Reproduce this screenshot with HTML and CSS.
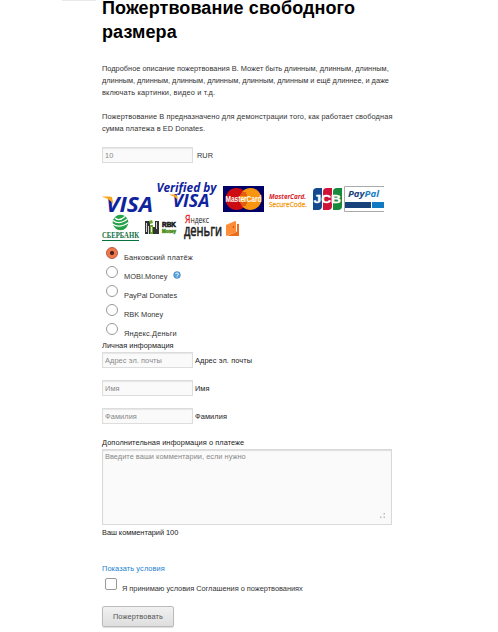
FILE: index.html
```
<!DOCTYPE html>
<html lang="ru">
<head>
<meta charset="utf-8">
<title>Пожертвование свободного размера</title>
<link rel="stylesheet" href="styles.css">
</head>
<body>
<div class="tab-edge"></div>
<main class="page">
  <h1 class="title">Пожертвование свободного<br>размера</h1>
  <p class="text"><span class="snug">Подробное описание пожертвования B. Может быть длинным, длинным, длинным,</span><br><span class="tight">длинным, длинным, длинным, длинным, длинным, длинным и ещё длиннее, и даже</span><br><span class="wider">включать картинки, видео и т.д.</span></p>
  <p class="text"><span class="wide">Пожертвование B предназначено для демонстрации того, как работает свободная</span><br>сумма платежа в ED Donates.</p>
  <div class="amount"><input class="field" type="text" placeholder="10"><span>RUR</span></div>

  <div class="logos">
    <svg width="51" height="33" viewBox="0 0 51 33">
      <text class="visa" x="4" y="32" font-size="21.500" textLength="47" lengthAdjust="spacingAndGlyphs">VISA</text>
      <path fill="#f9a51a" d="M.500 16.500H8q2 0 2.300 2l1 6Q8 18.500.500 17z"/>
    </svg>
    <svg class="verified" width="65" height="33" viewBox="0 0 65 33">
      <text class="visa" x="3.500" y="11.500" font-size="12" textLength="60" lengthAdjust="spacingAndGlyphs">Verified by</text>
      <text class="visa" x="19.500" y="26.500" font-size="17" textLength="37" lengthAdjust="spacingAndGlyphs">VISA</text>
      <path fill="#f9a51a" d="M16.500 14.500H22q1.500 0 2 1.500l.8 4.500Q22.500 16 16.500 15z"/>
    </svg>
    <svg class="mastercard" width="41" height="26" viewBox="0 0 41 26">
      <path fill="#000066" d="M0 0h41v26H0z"/>
      <circle cx="13.500" cy="13" r="11" fill="#cc0b12"/><circle cx="27.500" cy="13" r="11" fill="#f79410"/>
      <path stroke="#cc0b12" stroke-width=".8" d="M18 7h5M17 9h7M17 17h7M18 19h5"/>
      <text x="2.500" y="16" font-size="8.500" fill="#fff" font-weight="bold" textLength="36" lengthAdjust="spacingAndGlyphs">MasterCard</text>
    </svg>
    <svg class="secure" width="39" height="20" viewBox="0 0 39 20">
      <text class="open" x="0" y="7" font-size="7" fill="#d81e2a" font-weight="bold" font-style="italic" textLength="37" lengthAdjust="spacingAndGlyphs">MasterCard.</text>
      <text class="open" x="0" y="14.500" font-size="7.500" fill="#f5a01b" stroke="#f5a01b" stroke-width=".3" textLength="38" lengthAdjust="spacingAndGlyphs">SecureCode.</text>
    </svg>
    <svg class="jcb" width="29" height="22" viewBox="0 0 29 22">
      <path fill="#14488f" d="M4 0h5v18q0 4-4 4H0V4q0-4 4-4z"/>
      <path fill="#cf1238" d="M14 0h5v18q0 4-4 4h-5V4q0-4 4-4z"/>
      <path fill="#188a3c" d="M24 0h5v18q0 4-4 4h-5V4q0-4 4-4z"/>
      <text x=".5" y="14.500" font-size="10" fill="#fff" stroke="#fff" stroke-width=".3" font-weight="bold" textLength="27.500" lengthAdjust="spacingAndGlyphs">JCB</text>
    </svg>
    <svg class="paypal" width="40" height="26" viewBox="0 0 40 26">
      <path fill="#fff" stroke="#aaa" d="M40 .5H.5v25H40"/>
      <text class="open" x="4" y="10.500" font-size="9.500" fill="#17427c" font-weight="bold" font-style="italic" textLength="31" lengthAdjust="spacingAndGlyphs">Pay<tspan fill="#1a80c4">Pal</tspan></text>
      <path fill="#17427c" d="M1 16h26v6H1z"/><path fill="#117ac2" d="M28 16h12v6H28z"/>
    </svg>
  </div>
  <div class="logos second">
    <svg width="38" height="29" viewBox="0 0 38 29">
      <circle cx="18.500" cy="9.500" r="7.800" fill="#26a148"/>
      <g fill="none" stroke="#fff" stroke-width="1.200"><path d="M13 5q4 4 10-1.500M11 7.500q6 5 14.500-1.500M10.500 11q7 5 16-1.500"/></g>
      <text class="serif" x="0" y="25" font-size="7.500" fill="#126d3e" font-weight="bold" textLength="37" lengthAdjust="spacingAndGlyphs">СБЕРБАНК</text>
      <path fill="#06733c" d="M0 27h37v1H0z"/>
    </svg>
    <svg class="rbk" width="32" height="15" viewBox="0 0 32 15">
      <path fill="#333" d="M0 1h5v13H0zM10 1h4v13h-4z"/><path fill="#6ba72e" d="M5 5h3v9H5z"/><path fill="#333" d="M8 7h2v7H8z"/>
      <path fill="#6ba72e" d="m4 1 3-1 1 3-3 1z"/>
      <path stroke="#fff" stroke-width=".8" d="M1.500 3v9M3.500 6v8M11.500 2v7M6.500 7v5"/>
      <text x="17" y="7" font-size="6.500" fill="#222" stroke="#222" stroke-width=".6" font-weight="bold" textLength="14" lengthAdjust="spacingAndGlyphs">RBK</text>
      <text x="17" y="12.500" font-size="4.500" fill="#4f9021" stroke="#4f9021" stroke-width=".5" font-weight="bold" textLength="14" lengthAdjust="spacingAndGlyphs">Money</text>
    </svg>
    <svg class="yandex" width="58" height="29" viewBox="0 0 58 29">
      <text class="open" x="1" y="9.500" font-size="8.500" fill="#222" textLength="24" lengthAdjust="spacingAndGlyphs"><tspan fill="#e32119" stroke="#e32119" stroke-width=".3" font-size="11">Я</tspan>ндекс</text>
      <text class="open" x="0" y="23" font-size="15.500" fill="#222" stroke="#222" stroke-width=".6" textLength="38" lengthAdjust="spacingAndGlyphs">деньги</text>
      <path fill="#ff8c37" d="m42 12 9-4q1 0 1 1v10l-10 4z"/><path fill="#ef6c19" d="M53 11h2v12H43l10-4.500z"/><circle cx="49.500" cy="14" r=".8" fill="#a84418"/>
    </svg>
  </div>

  <div class="methods">
    <label class="method"><i class="radio on"></i><span class="wider">Банковский платёж</span></label>
    <label class="method"><i class="radio"></i><span>MOBI.Money</span>
      <svg class="help" width="8" height="8" viewBox="0 0 8 8"><circle cx="4" cy="4" r="3.400" fill="#5ba3dc" stroke="#2f74b5" stroke-width=".5"/><path fill="none" stroke="#fff" stroke-width=".8" d="M2.500 3q0-1 1.500-1t1.500 1T4 4.700M4 5.500v1"/></svg></label>
    <label class="method"><i class="radio"></i><span class="snug">PayPal Donates</span></label>
    <label class="method"><i class="radio"></i><span class="tight">RBK Money</span></label>
    <label class="method"><i class="radio"></i><span class="wider">Яндекс.Деньги</span></label>
  </div>
  <div class="legend">Личная информация</div>
  <div class="row"><input class="field" type="text" placeholder="Адрес эл. почты"><span class="wide">Адрес эл. почты</span></div>
  <div class="row"><input class="field" type="text" placeholder="Имя"><span>Имя</span></div>
  <div class="row"><input class="field" type="text" placeholder="Фамилия"><span class="wide">Фамилия</span></div>
  <div class="legend extra">Дополнительная информация о платеже</div>
  <div class="comment">
    <span>Введите ваши комментарии, если нужно</span>
    <svg class="grip" width="6" height="6" viewBox="0 0 6 6"><path fill="#bbb" d="M3.500 0H5v1.500H3.500zM3.500 3.500H5V5H3.500zM0 3.500h1.500V5H0z"/></svg>
  </div>
  <div class="legend count">Ваш комментарий 100</div>
  <a class="terms">Показать условия</a>
  <label class="accept"><i class="box"></i><span>Я принимаю условия Соглашения о пожертвованиях</span></label>
  <button class="submit">Пожертвовать</button>
</main>
</body>
</html>
```
FILE: styles.css
```
* { box-sizing: border-box; }
html { overflow: hidden; }
body {
  margin: 0;
  height: 632px;
  overflow: hidden;
  background: #fff;
  color: #333;
  font: 7.4px/12px "Liberation Sans", Arial, sans-serif;
  letter-spacing: .03px;
  white-space: nowrap;
}
svg { display: block; flex: none; overflow: visible; letter-spacing: 0; }
.tab-edge { width: 34px; height: 1px; margin-left: 62px; background: #e9e9e9; }
.page { width: 290px; margin: -5px 0 0 102px; }
.title {
  margin: 0 0 19px;
  color: #000;
  font-size: 18px;
  line-height: 24px;
  letter-spacing: .1px;
}
.text { margin: 0 0 12px; }
.snug { letter-spacing: .01px; }
.tight { letter-spacing: -.04px; }
.wide { letter-spacing: .09px; }
.wider { letter-spacing: .16px; }
.amount, .row { display: flex; align-items: center; height: 16px; }
.amount { gap: 4px; }
.amount span, .row span { padding-top: 1px; }
.row { gap: 2px; margin-bottom: 12px; color: #222; }
.field {
  width: 91px;
  height: 16px;
  padding: 1px 2px 0;
  border: 1px solid #ddd;
  border-radius: 0;
  box-shadow: inset 0 1px 1px #e6e6e6;
  background: #fafafa;
  font: inherit;
  letter-spacing: .08px;
}
.field::placeholder { color: #888; opacity: 1; }
.logos { display: flex; align-items: flex-start; height: 33px; margin-top: 17px; }
.logos.second { height: 29px; margin-top: 0; }
.visa { fill: #10239e; font-family: "Open Sans", sans-serif; font-weight: bold; font-style: italic; }
.open { font-family: "Open Sans", sans-serif; }
.serif { font-family: "Liberation Serif", serif; }
.mastercard { margin: 6px 0 0 5px; }
.secure { margin: 12px 0 0 5px; }
.jcb { margin: 8px 0 0 5px; }
.paypal { margin: 6px 0 0 2px; }
.rbk { margin: 7px 0 0 5px; }
.yandex { margin-left: 7px; }
.methods { padding-top: 4px; }
.method { display: flex; height: 19px; padding-left: 4px; align-items: flex-start; }
.method span { margin: 6px 0 0 6px; }
.radio {
  flex: none;
  width: 12px;
  height: 12px;
  margin-top: 1px;
  border: 1px solid #999;
  border-radius: 50%;
  background: #fff;
}
.radio.on { border-color: #b9583c; background: radial-gradient(circle, #4a2018 0 1.5px, #f07850 2.6px); }
.help { margin: 6px 0 0 6px; }
.legend { height: 12px; color: #222; }
.methods + .legend { margin: -1px 0 0; }
.extra { margin: 0; padding-top: 1px; height: 13px; letter-spacing: .06px; }
.comment {
  display: flex;
  justify-content: space-between;
  width: 290px;
  height: 76px;
  padding: 1px 5px 5px 2px;
  border: 1px solid #d9d9d9;
  box-shadow: inset 0 1px 1px #ddd;
  background: #fafafa;
  color: #888;
}
.grip { align-self: flex-end; }
.count { margin: 2px 0 24px; letter-spacing: -.04px; }
.terms { display: block; color: #1982d1; letter-spacing: .1px; }
.accept { display: flex; height: 20px; margin-top: 1px; padding-left: 3px; letter-spacing: -.02px; }
.accept span { margin: 7px 0 0 5px; }
.box { flex: none; width: 12px; height: 12px; margin-top: 2px; border: 1px solid #999; border-radius: 2px; }
.submit {
  display: block;
  width: 72px;
  height: 21px;
  margin: 10px 0 0;
  padding: 0;
  border: 1px solid #bbb;
  border-radius: 2px;
  background: linear-gradient(#f1f1f1, #dedede);
  box-shadow: 0 1px 1px #ddd;
  color: #555;
  font: inherit;
  letter-spacing: .12px;
}
```
